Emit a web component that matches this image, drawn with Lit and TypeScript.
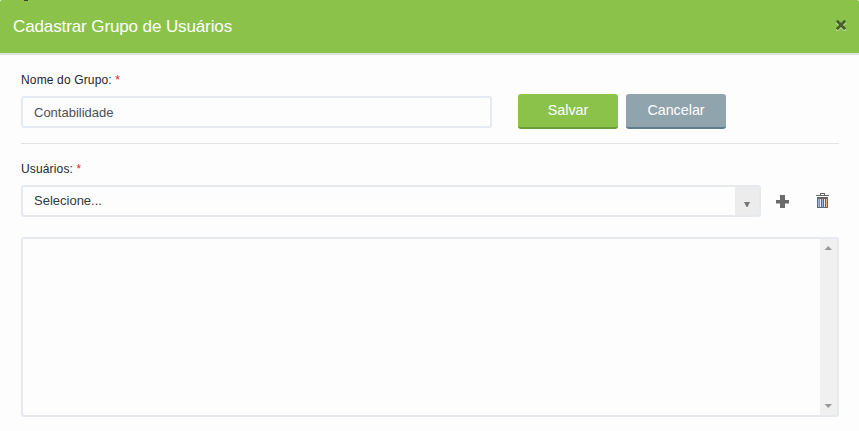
import { LitElement, html, css, svg } from "lit";
import { customElement, property } from "lit/decorators.js";

@customElement("field-label")
class FieldLabel extends LitElement {
  @property() text = "";
  static styles = css`
    :host { display: block; height: 16px; font: 12px/16px "Liberation Sans", Arial, sans-serif; letter-spacing: 0.15px; color: #212529; white-space: nowrap; }
    .required { color: #f0141e; }
  `;
  render() {
    return html`${this.text} <span class="required">*</span>`;
  }
}

@customElement("app-root")
class AppRoot extends LitElement {
  static styles = css`
    :host { display: block; height: 431px; background: #fdfdfd; overflow: hidden; font-family: "Liberation Sans", Arial, sans-serif; }
    * { box-sizing: border-box; }
    .header { position: relative; height: 55px; display: flex; align-items: center; justify-content: space-between; padding: 0 13px; background: #8bc34a; border-bottom: 2px solid #dee2e6; border-radius: 2px 2px 0 0; }
    .title { margin: 0; font-size: 17px; letter-spacing: -0.11px; line-height: 20px; font-weight: 400; color: #fff; white-space: nowrap; }
    .speck { position: absolute; left: 24px; top: 0; width: 4px; height: 1px; background: #34451f; }
    .close { width: 12px; height: 12px; margin: 0 -1px 4px 0; }
    svg { display: block; }
    .body { padding: 17px 20px 0 21px; }
    .top { display: flex; align-items: flex-start; height: 72px; border-bottom: 1px solid #e2e4e6; margin-bottom: 17px; }
    .group { width: 471px; margin-right: 26px; }
    .input { display: flex; align-items: center; height: 32px; border: 2px solid #e6eaee; border-radius: 3px; padding: 0 11px; font-size: 13px; color: #495057; background: #fdfdfd; }
    .group .input { margin-top: 8px; }
    .group .text { padding-top: 1px; }
    .text { font: 13px/16px "Liberation Sans", Arial, sans-serif; white-space: nowrap; }
    .buttons { display: flex; gap: 8px; margin-top: 22px; }
    .btn { width: 100px; height: 35px; padding: 0 0 1px; border: 0; border-bottom: 2px solid #689f38; border-radius: 3px; background: #8bc34a; color: #fff; font: 14.3px/18px "Liberation Sans", Arial, sans-serif; }
    .btn.cancel { background: #90a4ae; border-bottom-color: #607d8b; }
    .row { display: flex; align-items: center; margin-top: 8px; }
    .select { width: 740px; padding-right: 0; justify-content: space-between; }
    .select .text { color: #343a40; }
    .arrow { width: 24px; height: 28px; background: #ececec; display: flex; justify-content: center; padding-top: 15px; }
    .plus { margin-left: 15px; margin-top: 1px; }
    .trash { margin-left: 27px; margin-top: -1px; }
    .list { height: 180px; margin-top: 20px; border: 2px solid #e6eaee; border-radius: 3px; display: flex; justify-content: flex-end; }
    .scroll { width: 17px; background: #f0f0f0; display: flex; flex-direction: column; justify-content: space-between; align-items: center; padding: 7px 0 7px; }
  `;

  private tri(down: boolean) {
    return html`<svg width="9" height="4" viewBox="0 0 9 4">
      ${down ? svg`<path d="M0.5 0H8L4.2 4Z" fill="#999"/>` : svg`<path d="M4.2 0L8 4H0.5Z" fill="#999"/>`}
    </svg>`;
  }

  render() {
    return html`
      <header class="header">
        <span class="speck"></span>
        <h1 class="title">Cadastrar Grupo de Usuários</h1>
        <svg class="close" viewBox="0 0 12 12" fill="none" stroke-width="2.8">
          <path d="M1.5 3L10.5 11.5M10.5 3L1.5 11.5" stroke="#c5e1a4"/>
          <path d="M1.8 1.8L10.2 10.2M10.2 1.8L1.8 10.2" stroke="#46622a"/>
        </svg>
      </header>
      <main class="body">
        <section class="top">
          <div class="group">
            <field-label text="Nome do Grupo:"></field-label>
            <div class="input"><span class="text">Contabilidade</span></div>
          </div>
          <div class="buttons">
            <button class="btn">Salvar</button>
            <button class="btn cancel">Cancelar</button>
          </div>
        </section>
        <field-label text="Usuários:"></field-label>
        <div class="row">
          <div class="input select">
            <span class="text">Selecione...</span>
            <span class="arrow"><svg width="6" height="5" viewBox="0 0 6 5"><path d="M0 0H6L3.5 5H2.5Z" fill="#777"/></svg></span>
          </div>
          <svg class="plus" width="13" height="13" viewBox="0 0 13 13">
            <path d="M0 5H4V0H9V5H13V8.5H9V13H4V8.5H0Z" fill="#6b6b6b"/>
          </svg>
          <svg class="trash" width="13" height="15" viewBox="0 0 13 15" shape-rendering="crispEdges">
            <path d="M4 0H9V2H13V3H0V2H4ZM5 1V2H8V1Z" fill="#666"/>
            <path d="M1 4H12V15H1Z" fill="#666"/>
            <path d="M2 6H3V14H2ZM6 6H7V14H6Z" fill="#8fbcf0"/>
            <path d="M4 6H5V14H4ZM8 6H9V14H8Z" fill="#f3e6d8"/>
            <path d="M3 6H4V14H3Z" fill="#a98b78"/>
            <path d="M10 6H11V14H10Z" fill="#f0b07c"/>
          </svg>
        </div>
        <div class="list"><div class="scroll">${this.tri(false)}${this.tri(true)}</div></div>
      </main>
    `;
  }
}
